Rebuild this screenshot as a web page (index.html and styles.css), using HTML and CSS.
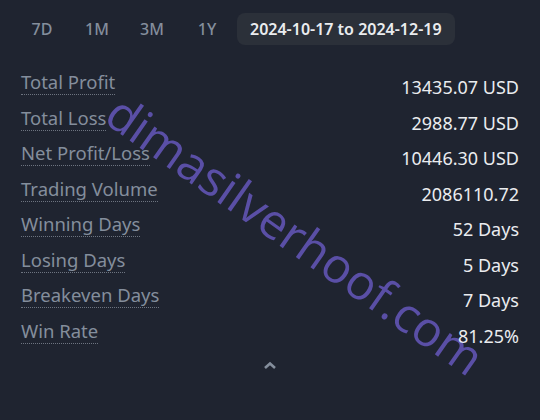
FILE: index.html
```html
<!DOCTYPE html>
<html>
<head>
<meta charset="utf-8">
<link rel="stylesheet" href="styles.css">
</head>
<body>
<div class="page">
  <div class="watermark">dimasilverhoof.com</div>
  <div class="tabs">
    <span class="tab">7D</span>
    <span class="tab">1M</span>
    <span class="tab">3M</span>
    <span class="tab">1Y</span>
    <span class="tab active">2024-10-17 to 2024-12-19</span>
  </div>
  <div class="rows">
    <div class="row"><span class="label">Total Profit</span><span class="value">13435.07 USD</span></div>
    <div class="row"><span class="label">Total Loss</span><span class="value">2988.77 USD</span></div>
    <div class="row"><span class="label">Net Profit/Loss</span><span class="value">10446.30 USD</span></div>
    <div class="row"><span class="label">Trading Volume</span><span class="value">2086110.72</span></div>
    <div class="row"><span class="label">Winning Days</span><span class="value">52 Days</span></div>
    <div class="row"><span class="label">Losing Days</span><span class="value">5 Days</span></div>
    <div class="row"><span class="label">Breakeven Days</span><span class="value">7 Days</span></div>
    <div class="row"><span class="label">Win Rate</span><span class="value">81.25%</span></div>
  </div>
  <div class="more">
    <svg width="14" height="9" viewBox="0 0 14 9"><path d="M2 7 L7 2.5 L12 7" fill="none" stroke="#848e9c" stroke-width="2.6"/></svg>
  </div>
</div>
</body>
</html>
```
FILE: styles.css
```css
html, body { margin: 0; padding: 0; }
body {
  background: #1f2430;
  width: 540px;
  height: 420px;
  overflow: hidden;
  font-family: "Noto Sans", "Open Sans", sans-serif;
}
.page {
  position: relative;
  width: 540px;
  height: 420px;
}
.tabs {
  position: relative;
  display: flex;
  align-items: center;
  padding: 13px 0 0 20px;
  height: 32px;
}
.tab {
  color: #848e9c;
  font-size: 16px;
  font-weight: 500;
  width: 44px;
  text-align: center;
  margin-right: 11px;
  line-height: 32px;
}
.tab.active {
  width: auto;
  background: #2b3039;
  color: #eaecef;
  border-radius: 8px;
  margin-left: -3px;
  font-weight: 600;
  padding: 0 13px;
}
.rows {
  position: relative;
  padding: 25px 21px 0 21px;
}
.row {
  display: flex;
  justify-content: space-between;
  align-items: flex-start;
  height: 35.5px;
}
.label {
  color: #848e9c;
  font-size: 18.5px;
  line-height: 24px;
  border-bottom: 1px dotted #6d7480;
}
.value {
  color: #eaecef;
  font-size: 18px;
  line-height: 24px;
  margin-top: 5px;
}
.more {
  position: relative;
  display: flex;
  justify-content: center;
  padding-top: 7px;
}
.watermark {
  position: absolute;
  left: 296px;
  top: 234px;
  font-family: "Open Sans", sans-serif;
  font-size: 48.5px;
  color: #5a4fa6;
  transform: translate(-50%, -50%) rotate(35deg);
  white-space: nowrap;
  line-height: 56px;
}
```
